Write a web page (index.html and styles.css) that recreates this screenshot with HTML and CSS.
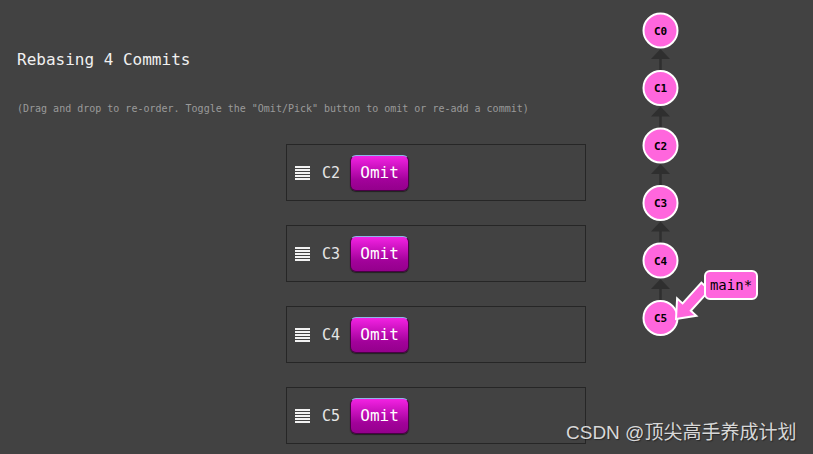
FILE: index.html
```html
<!DOCTYPE html>
<html>
<head>
<meta charset="utf-8">
<link rel="stylesheet" href="styles.css">
</head>
<body>
<div class="page">
  <header class="header">
    <h1 class="title">Rebasing 4 Commits</h1>
    <p class="hint">(Drag and drop to re-order. Toggle the "Omit/Pick" button to omit or re-add a commit)</p>
  </header>
  <div class="list">
    <div class="card"><span class="grip"><i></i><i></i><i></i><i></i><i></i></span><span class="cid">C2</span><button class="omit">Omit</button></div>
    <div class="card"><span class="grip"><i></i><i></i><i></i><i></i><i></i></span><span class="cid">C3</span><button class="omit">Omit</button></div>
    <div class="card"><span class="grip"><i></i><i></i><i></i><i></i><i></i></span><span class="cid">C4</span><button class="omit">Omit</button></div>
    <div class="card"><span class="grip"><i></i><i></i><i></i><i></i><i></i></span><span class="cid">C5</span><button class="omit">Omit</button></div>
  </div>
  <svg class="tree" width="813" height="454" viewBox="0 0 813 454">
    <g class="edges">
      <line x1="660.5" y1="57" x2="660.5" y2="70"/>
      <polygon points="660.5,49 651,59 670,59"/>
      <line x1="660.5" y1="114" x2="660.5" y2="128"/>
      <polygon points="660.5,106.5 651,116.5 670,116.5"/>
      <line x1="660.5" y1="172" x2="660.5" y2="185"/>
      <polygon points="660.5,164 651,174 670,174"/>
      <line x1="660.5" y1="229" x2="660.5" y2="243"/>
      <polygon points="660.5,221.5 651,231.5 670,231.5"/>
      <line x1="660.5" y1="287" x2="660.5" y2="300"/>
      <polygon points="660.5,279 651,289 670,289"/>
    </g>
    <g class="nodes">
      <circle cx="660.5" cy="30.5" r="17"/><text x="660.5" y="34.5">C0</text>
      <circle cx="660.5" cy="88" r="17"/><text x="660.5" y="92">C1</text>
      <circle cx="660.5" cy="145.5" r="17"/><text x="660.5" y="149.5">C2</text>
      <circle cx="660.5" cy="203" r="17"/><text x="660.5" y="207">C3</text>
      <circle cx="660.5" cy="260.5" r="17"/><text x="660.5" y="264.5">C4</text>
      <circle cx="660.5" cy="318" r="17"/><text x="660.5" y="322">C5</text>
    </g>
    <polygon class="ptr" points="676,319 696.3,315.8 690.8,310.8 709.6,290.1 701.4,282.7 682.6,303.4 677.1,298.4"/>
    <rect class="label" x="705" y="271" width="52" height="28" rx="5"/>
    <text class="labeltext" x="731" y="290">main*</text>
  </svg>
  <div class="watermark">CSDN @顶尖高手养成计划</div>
</div>
</body>
</html>
```
FILE: styles.css
```css
html, body {
  margin: 0;
  padding: 0;
  background: #424242;
}
.page {
  position: relative;
  width: 813px;
  height: 454px;
  overflow: hidden;
  font-family: "DejaVu Sans Mono", monospace;
}
.header {
  padding: 49px 0 0 17px;
}
.title {
  margin: 0;
  font-size: 16px;
  line-height: 22px;
  font-weight: normal;
  color: #f0f0f0;
}
.hint {
  margin: 31px 0 0 0;
  font-size: 10px;
  line-height: 14px;
  color: #9a9a9a;
}
.list {
  margin: 28px 0 0 286px;
  display: flex;
  flex-direction: column;
  gap: 24px;
  width: 300px;
}
.card {
  box-sizing: border-box;
  height: 57px;
  border: 1px solid #262626;
  display: flex;
  align-items: center;
  padding: 0 0 0 8px;
  background: #424242;
}
.grip {
  display: flex;
  flex-direction: column;
  gap: 1px;
  width: 15px;
  margin-top: 1px;
}
.grip i {
  display: block;
  height: 2px;
  background: #f2f2f2;
}
.cid {
  margin-left: 12px;
  font-size: 15px;
  color: #e6e6e6;
}
.omit {
  margin-left: 10px;
  width: 59px;
  height: 36px;
  box-sizing: border-box;
  border: 1px solid #4a0046;
  border-top-color: #8fb4e8;
  border-radius: 6px;
  background: linear-gradient(#f322e3, #a2029a 70%, #94008c);
  color: #ffffff;
  font-family: "DejaVu Sans Mono", monospace;
  font-size: 16px;
  padding: 0;
  box-shadow: 0 1px 1px rgba(0,0,0,0.5);
}
.tree {
  position: absolute;
  left: 0;
  top: 0;
}
.edges line {
  stroke: #2f2f2f;
  stroke-width: 2.5;
}
.edges polygon {
  fill: #2f2f2f;
}
.nodes circle {
  fill: #ff66dd;
  stroke: #ffffff;
  stroke-width: 2;
}
.nodes text {
  font-family: "DejaVu Sans Mono", monospace;
  font-weight: bold;
  font-size: 11px;
  text-anchor: middle;
  fill: #000000;
}
.ptr {
  fill: #ff66dd;
  stroke: #ffffff;
  stroke-width: 2;
  stroke-linejoin: miter;
}
.label {
  fill: #ff66dd;
  stroke: #ffffff;
  stroke-width: 2;
}
.labeltext {
  font-family: "DejaVu Sans Mono", monospace;
  font-size: 14px;
  text-anchor: middle;
  fill: #000000;
}
.watermark {
  position: absolute;
  left: 566px;
  top: 420px;
  font-family: "Liberation Sans", "Noto Sans CJK SC", sans-serif;
  font-size: 19px;
  line-height: 26px;
  color: #d8d8d8;
  text-shadow: 1px 1px 1px rgba(0,0,0,0.4);
  white-space: nowrap;
}
```
